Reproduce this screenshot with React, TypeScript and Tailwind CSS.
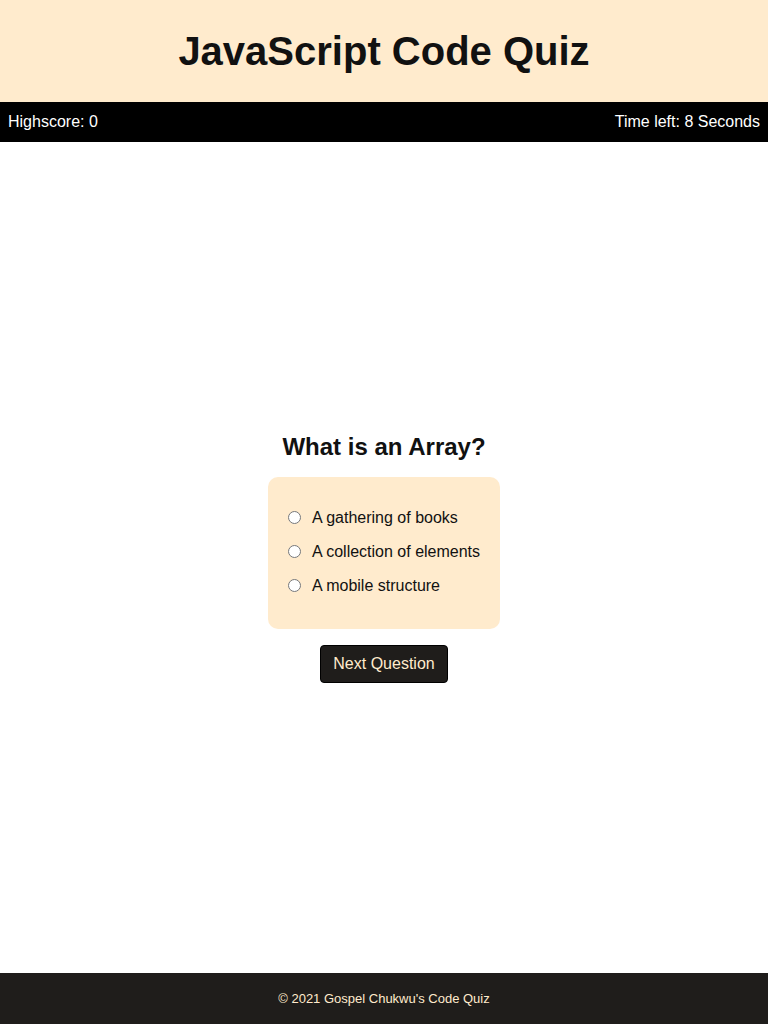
export default function App() {
  const choices = ['A gathering of books', 'A collection of elements', 'A mobile structure'];

  return (
    <div className="min-h-screen flex flex-col bg-white font-['Liberation_Sans',Arial,sans-serif] text-black">
      <header className="bg-[#ffebcd] h-[102px] flex items-center justify-center">
        <h1 className="text-[40px] font-bold leading-none text-[#111]">JavaScript Code Quiz</h1>
      </header>

      <div className="bg-black text-white h-[40px] px-2 flex items-center justify-between text-[16px]">
        <span>Highscore: 0</span>
        <span>Time left: 8 Seconds</span>
      </div>

      <main className="flex-1 flex flex-col items-center justify-center">
        <h2 className="text-[24px] font-bold leading-[28px] text-[#111] mb-4">What is an Array?</h2>

        <div className="bg-[#ffebcd] rounded-[10px] px-5 pt-6 pb-[26px] min-w-[232px]">
          {choices.map((c) => (
            <label key={c} className="flex items-center h-[34px] text-[16px] text-[#111] whitespace-nowrap">
              <input type="radio" name="answer" className="w-[13px] h-[13px] ml-0 mr-[11px] accent-gray-500" />
              {c}
            </label>
          ))}
        </div>

        <button className="mt-4 h-[38px] px-3 bg-[#1f1d1b] text-[#ffebcd] text-[16px] rounded-[4px] border border-black">
          Next Question
        </button>
      </main>

      <footer className="bg-[#1f1d1b] h-[51px] flex items-center justify-center text-[#ffebcd] text-[13px]">
        © 2021 Gospel Chukwu's Code Quiz
      </footer>
    </div>
  );
}
